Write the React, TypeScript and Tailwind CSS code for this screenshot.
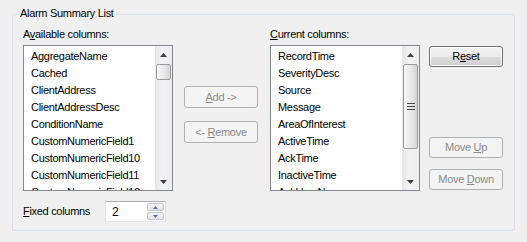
import React from "react";

const FONT = { fontFamily: '"Liberation Sans", Arial, sans-serif' };

function Arrow({ dir, color = "#3f3f3f" }: { dir: "up" | "down"; color?: string }) {
  return (
    <svg width="7" height="4" viewBox="0 0 7 4" className="block">
      {dir === "up" ? <path d="M3.5 0 L7 4 L0 4 Z" fill={color} /> : <path d="M0 0 L7 0 L3.5 4 Z" fill={color} />}
    </svg>
  );
}

function ScrollBar({ thumbH, grip }: { thumbH: number; grip?: boolean }) {
  return (
    <div className="flex h-full w-[17px] flex-col bg-[linear-gradient(to_right,#e6e6e6,#f2f2f2_40%,#eeeeee)]">
      <div className="flex h-[17px] items-center justify-center">
        <Arrow dir="up" />
      </div>
      <div
        className="mx-auto mt-[1px] flex w-[15px] items-center justify-center rounded-[2px] border border-[#9b9b9b] bg-[linear-gradient(to_right,#f6f6f6,#e9e9e9_50%,#d6d6d6)]"
        style={{ height: thumbH }}
      >
        {grip && (
          <div className="flex flex-col gap-[2px]">
            <div className="h-[1px] w-[8px] bg-[#4a4a4a]" />
            <div className="h-[1px] w-[8px] bg-[#4a4a4a]" />
            <div className="h-[1px] w-[8px] bg-[#4a4a4a]" />
          </div>
        )}
      </div>
      <div className="flex-1" />
      <div className="flex h-[17px] items-center justify-center">
        <Arrow dir="down" />
      </div>
    </div>
  );
}

function ListBox({ items, thumbH, grip }: { items: string[]; thumbH: number; grip?: boolean }) {
  return (
    <div className="flex h-[146px] w-[150px] border border-[#828790] bg-white">
      <div className="flex-1 overflow-hidden pl-[7px] pt-[2px]">
        {items.map((t) => (
          <div key={t} className="h-[17px] whitespace-nowrap leading-[17px] text-[#000]">
            {t}
          </div>
        ))}
      </div>
      <ScrollBar thumbH={thumbH} grip={grip} />
    </div>
  );
}

function Btn({ children, disabled, className = "" }: { children: React.ReactNode; disabled?: boolean; className?: string }) {
  return (
    <div
      className={
        "flex h-[21px] w-[74px] items-center justify-center rounded-[3px] border leading-[13px] " +
        (disabled
          ? "border-[#adb2b5] bg-[#f4f4f4] text-[#8a8a8a] "
          : "border-[#707070] bg-[linear-gradient(to_bottom,#f2f2f2_0%,#ebebeb_50%,#dddddd_50%,#cfcfcf_100%)] text-black shadow-[inset_0_0_0_1px_#fbfbfb] ") +
        className
      }
    >
      {children}
    </div>
  );
}

export default function App() {
  const left = [
    "AggregateName",
    "Cached",
    "ClientAddress",
    "ClientAddressDesc",
    "ConditionName",
    "CustomNumericField1",
    "CustomNumericField10",
    "CustomNumericField11",
    "CustomNumericField12",
  ];
  const right = [
    "RecordTime",
    "SeverityDesc",
    "Source",
    "Message",
    "AreaOfInterest",
    "ActiveTime",
    "AckTime",
    "InactiveTime",
    "AckUserName",
  ];
  return (
    <div className="h-[242px] w-[527px] bg-[#f0f0f0] pl-[12px] pt-[14px] text-[11px] tracking-[-0.3px]" style={FONT}>
      <div className="relative h-[217px] w-[503px] rounded-[3px] border border-[#d5dfe5] pl-[10px] pt-[13px]">
        <span className="absolute -top-[8px] left-[5px] bg-[#f0f0f0] px-[2px] leading-[13px] text-black">
          Alarm Summary List
        </span>
        <div className="flex items-start">
          <div className="flex w-[150px] flex-col">
            <div className="h-[13px] leading-[13px]">
              A<u>v</u>ailable columns:
            </div>
            <div className="mt-[4px]">
              <ListBox items={left} thumbH={16} />
            </div>
          </div>
          <div className="ml-[11px] mt-[58px] flex flex-col gap-[13px]">
            <Btn disabled className="h-[22px]">
              <span>
                <u>A</u>dd -&gt;
              </span>
            </Btn>
            <Btn disabled className="h-[22px]">
              <span>
                &lt;- <u>R</u>emove
              </span>
            </Btn>
          </div>
          <div className="ml-[12px] flex w-[150px] flex-col">
            <div className="h-[13px] leading-[13px]">
              <u>C</u>urrent columns:
            </div>
            <div className="mt-[4px]">
              <ListBox items={right} thumbH={85} grip />
            </div>
          </div>
          <div className="ml-[9px] mt-[18px] flex flex-col">
            <Btn>
              <span>
                R<u>e</u>set
              </span>
            </Btn>
            <Btn disabled className="mt-[70px]">
              <span>
                Move <u>U</u>p
              </span>
            </Btn>
            <Btn disabled className="mt-[11px]">
              <span>
                Move <u>D</u>own
              </span>
            </Btn>
          </div>
        </div>
        <div className="mt-[10px] flex items-center">
          <div className="w-[82px] leading-[13px]">
            <u>F</u>ixed columns
          </div>
          <div className="flex h-[21px] w-[61px] items-stretch border border-[#abadb3] border-l-[#e2e3ea] border-r-[#dbdfe6] border-b-[#e3e9ef] bg-white">
            <div className="flex flex-1 items-center pl-[6px] text-[12px]">2</div>
            <div className="flex w-[18px] flex-col gap-[1px] py-[1px] pr-[1px]">
              <div className="flex flex-1 items-center justify-center rounded-[2px] border border-[#c2c5ca] bg-[linear-gradient(to_bottom,#f5f5f5,#e2e4e8)]">
                <svg width="5" height="3" viewBox="0 0 5 3" className="block">
                  <path d="M2.5 0 L5 3 L0 3 Z" fill="#4b70b0" />
                </svg>
              </div>
              <div className="flex flex-1 items-center justify-center rounded-[2px] border border-[#c2c5ca] bg-[linear-gradient(to_bottom,#f5f5f5,#e2e4e8)]">
                <svg width="5" height="3" viewBox="0 0 5 3" className="block">
                  <path d="M0 0 L5 0 L2.5 3 Z" fill="#4b70b0" />
                </svg>
              </div>
            </div>
          </div>
        </div>
      </div>
    </div>
  );
}
